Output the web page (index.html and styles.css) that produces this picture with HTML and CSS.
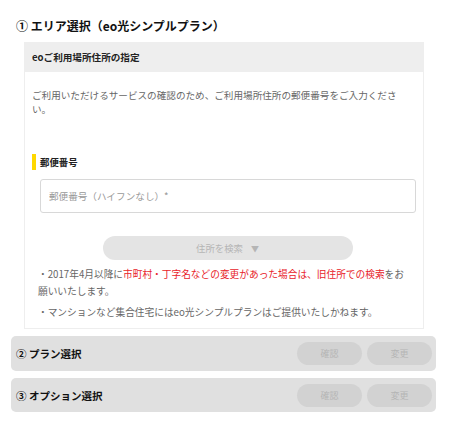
FILE: index.html
```html
<!DOCTYPE html>
<html lang="ja">
<head>
<meta charset="utf-8">
<link rel="stylesheet" href="styles.css">
</head>
<body>
<div class="page">
  <h2 class="step-title">① エリア選択（eo光シンプルプラン）</h2>
  <div class="card">
    <div class="card-head">eoご利用場所住所の指定</div>
    <div class="card-body">
      <p class="desc">ご利用いただけるサービスの確認のため、ご利用場所住所の郵便番号をご入力ください。</p>
      <div class="label">郵便番号</div>
      <div class="field"><input class="input" type="text" placeholder="郵便番号（ハイフンなし）*"></div>
      <div class="search-row"><button class="search-btn">住所を検索<span class="tri">▼</span></button></div>
      <div class="notes">
        <p class="note">・2017年4月以降に<span class="red">市町村・丁字名などの変更があった場合は、旧住所での検索</span>をお願いいたします。</p>
        <p class="note">・マンションなど集合住宅にはeo光シンプルプランはご提供いたしかねます。</p>
      </div>
    </div>
  </div>
  <div class="step">
    <div class="step-name">② プラン選択</div>
    <div class="step-btns"><button class="pill">確認</button><button class="pill">変更</button></div>
  </div>
  <div class="step">
    <div class="step-name">③ オプション選択</div>
    <div class="step-btns"><button class="pill">確認</button><button class="pill">変更</button></div>
  </div>
</div>
</body>
</html>
```

FILE: styles.css
```css
* { box-sizing: border-box; }
html, body { margin: 0; padding: 0; background: #fff; }
body {
  font-family: "Noto Sans CJK JP", "Noto Sans", sans-serif;
  color: #666;
}
.page {
  padding: 18px 14px 0 11px;
  width: 450px;
}
.step-title {
  margin: 0 0 8px 5px;
  font-size: 12px;
  line-height: 16px;
  font-weight: bold;
  color: #111;
}
.card {
  margin-left: 13px;
  width: 400px;
  border: 1px solid #eeeeee;
  border-top: none;
}
.card-head {
  height: 30px;
  line-height: 30px;
  background: #eeeeee;
  padding-left: 7px;
  font-size: 9.6px;
  font-weight: bold;
  color: #222;
}
.card-body {
  padding: 16px 7px 7px 7px;
}
.desc {
  margin: 0;
  padding-right: 14px;
  font-size: 9.6px;
  line-height: 14px;
  color: #666;
}
.label {
  margin-top: 38px;
  border-left: 4px solid #ffd800;
  padding-left: 4px;
  height: 16px;
  line-height: 16px;
  font-size: 9.4px;
  font-weight: bold;
  color: #222;
}
.field {
  margin: 9px 0 0 8px;
}
.input {
  display: block;
  width: 100%;
  height: 34px;
  border: 1px solid #d8d8d8;
  border-radius: 3px;
  padding: 0 8px;
  font-family: inherit;
  font-size: 9.6px;
  color: #333;
  background: #fff;
  outline: none;
}
.input::placeholder { color: #999; }
.search-row {
  display: flex;
  justify-content: center;
  margin-top: 23px;
}
.search-btn {
  width: 250px;
  height: 24px;
  border: none;
  border-radius: 12px;
  background: #e4e4e4;
  color: #b5b5b5;
  font-family: inherit;
  font-size: 9.4px;
  padding: 0;
  margin-left: 7px;
}
.tri { margin-left: 8px; font-size: 8px; }
.notes {
  margin-top: 6px;
  padding-left: 6px;
  padding-right: 8px;
}
.note {
  margin: 0 0 4px;
  font-size: 9.7px;
  line-height: 17px;
  color: #666;
}
.note:last-child { margin-bottom: 0; }
.red { color: #e8232a; }
.step {
  margin-top: 7px;
  width: 425px;
  height: 35px;
  background: #e0e0e0;
  border-radius: 5px;
  display: flex;
  align-items: center;
  justify-content: space-between;
  padding: 0 4px 0 5px;
}
.step + .step { height: 34px; }
.step-name {
  font-size: 10.5px;
  font-weight: bold;
  color: #111;
}
.step-btns { display: flex; gap: 5px; }
.pill {
  width: 65px;
  height: 23px;
  border: none;
  border-radius: 12px;
  background: #d2d2d2;
  color: #b5b5b5;
  font-family: inherit;
  font-size: 9px;
  padding: 0;
}
```
